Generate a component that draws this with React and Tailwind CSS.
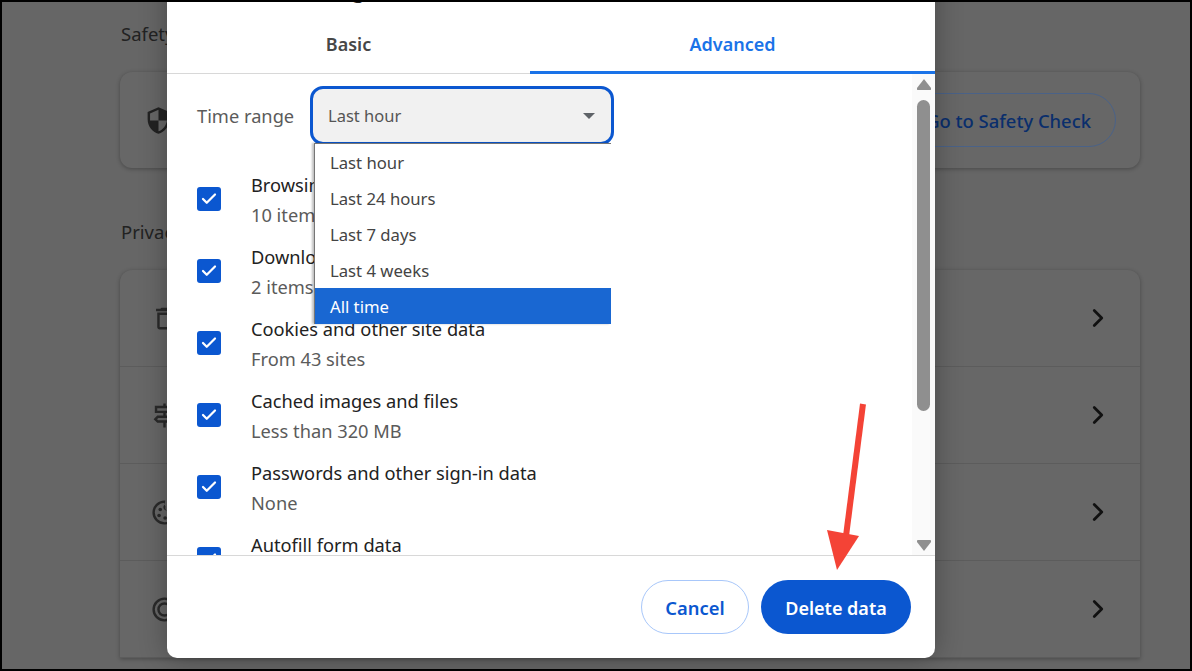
import React from 'react';
import { Check, ChevronRight } from 'lucide-react';

const font = { fontFamily: '"Noto Sans", "Liberation Sans", sans-serif' };

const TrashIcon = () => (
  <svg viewBox="0 0 24 24" className="w-[29px] h-[29px] fill-[#2a2a2a]">
    <path d="M6 19c0 1.1.9 2 2 2h8c1.1 0 2-.9 2-2V7H6v12zM8 9h8v10H8V9zm7.5-5l-1-1h-5l-1 1H5v2h14V4z" />
  </svg>
);

const SignIcon = () => (
  <svg viewBox="0 0 24 24" className="w-[29px] h-[29px] fill-[#2a2a2a]">
    <path d="M13 10h5l3-3-3-3h-5V2h-2v2H4v6h7v2H6l-3 3 3 3h5v4h2v-4h7v-6h-7v-2zM6 6h11.17l1 1-1 1H6V6zm12 10H6.83l-1-1 1-1H18v2z" />
  </svg>
);

const CookieIcon = () => (
  <svg viewBox="0 0 24 24" className="w-[29px] h-[29px] fill-[#2a2a2a]">
    <path d="M12 2a10 10 0 1 0 10 10c0-.5 0-1-.1-1.5-.9.9-2.300 1-3.400.3-1.300.7-2.900.5-3.900-.5-1.200.3-2.600-.2-3.200-1.400-.6-1.100-.4-2.500.5-3.400C12.600 5 12.400 4 12.500 2H12zm0 2v.5c0 .9.300 1.800.8 2.500-.3 1.200-.1 2.400.7 3.400.9 1 2.100 1.500 3.300 1.400 1 .5 2.100.7 3.200.4A8 8 0 1 1 12 4z" />
    <circle cx="8.500" cy="9.500" r="1.500" />
    <circle cx="7.500" cy="14.500" r="1.500" />
    <circle cx="12.500" cy="16.500" r="1.500" />
  </svg>
);

const TargetIcon = () => (
  <svg viewBox="0 0 24 24" className="w-[29px] h-[29px] fill-none stroke-[#2a2a2a] stroke-2">
    <circle cx="12" cy="12" r="9" />
    <circle cx="12" cy="12" r="5" />
  </svg>
);

const settingRows = [<TrashIcon />, <SignIcon />, <CookieIcon />, <TargetIcon />];

const deleteOptions = [
  { title: 'Browsing history', sub: '10 items' },
  { title: 'Download history', sub: '2 items' },
  { title: 'Cookies and other site data', sub: 'From 43 sites' },
  { title: 'Cached images and files', sub: 'Less than 320 MB' },
  { title: 'Passwords and other sign-in data', sub: 'None' },
  { title: 'Autofill form data', sub: '' },
];

const ranges = ['Last hour', 'Last 24 hours', 'Last 7 days', 'Last 4 weeks', 'All time'];

const SettingsBehind = () => (
  <div className="pl-[118px] pr-[50px] pt-[18px] h-full bg-[#666666] text-[#222222]">
    <h2 className="text-[18.5px] leading-[28px] h-[52px] pl-px">Safety Check</h2>
    <div className="h-[96px] rounded-[12px] bg-[#676767] shadow-[0_1px_4px_rgba(0,0,0,0.3)] flex items-center justify-between pl-[24px] pr-[24px]">
      <svg viewBox="0 0 24 24" className="w-[29px] h-[29px] fill-[#222222]">
        <path d="M12 1L3 5v6c0 5.550 3.840 10.740 9 12 5.160-1.260 9-6.450 9-12V5l-9-4zm0 10.990h7c-.53 4.120-3.280 7.790-7 8.940V12H5V6.300l7-3.110v8.800z" />
      </svg>
      <div className="h-[54px] px-[24px] pt-[2px] rounded-full border border-[#4a6288] flex items-center text-[#0a2e6c] text-[18.400px] font-medium">
        Go to Safety Check
      </div>
    </div>
    <h2 className="text-[18.5px] leading-[28px] mt-[50px] h-[28px] pl-px">Privacy and security</h2>
    <div className="mt-[24px] rounded-t-[12px] bg-[#676767] shadow-[0_1px_4px_rgba(0,0,0,0.3)]">
      {settingRows.map((icon, i) => (
        <div key={i} className="h-[97px] border-b border-[#5c5c5c] flex items-center justify-between pl-[30px] pr-[27px]">
          {icon}
          <ChevronRight size={30} strokeWidth={2.200} className="text-[#111111]" />
        </div>
      ))}
    </div>
  </div>
);

const DeleteDialog = () => (
  <div className="absolute left-[165px] top-[-38px] w-[768px] h-[694px] bg-white rounded-[10px] shadow-[0_0_28px_rgba(0,0,0,0.3)] flex flex-col">
    <div className="h-[51px] shrink-0 pl-[30px] pt-[10px] text-[22px] leading-[30px] text-[#222222]">Delete browsing data</div>

    <div className="flex h-[59px] shrink-0 text-[18px] font-semibold">
      <div className="w-[363px] border-b border-[#d8d8d8] flex items-center justify-center text-[#474747]">Basic</div>
      <div className="flex-1 border-b-[3px] border-[#1a73e8] pt-[2px] flex items-center justify-center text-[#1a73e8]">Advanced</div>
    </div>

    <div className="flex-1 flex min-h-0">
      <div className="flex-1 overflow-hidden pl-[30px]">
        <div className="flex items-center pt-[12px] mb-[18px]">
          <span className="w-[113px] text-[18.250px] text-[#5b5b5b]">Time range</span>
          <div className="relative">
            <div className="w-[304px] h-[59px] rounded-[13px] border-[3px] border-[#0b57d0] bg-[#f1f1f1] flex items-center justify-between pl-[15px] pr-[16px] text-[16.500px] text-[#555555]">
              <span className="pt-[2px]">Last hour</span>
              <svg viewBox="0 0 12 6" className="w-[12px] h-[6px] fill-[#5f6368]"><path d="M0 0h12L6 6z" /></svg>
            </div>
            <ul className="absolute left-[4px] top-[57px] w-[297px] bg-white border-l border-t border-[#767676] shadow-[-2px_0_2px_rgba(0,0,0,0.25)] text-[16.700px] text-[#444444]">
              {ranges.map(r => (
                <li key={r} className={`h-[36px] pl-[15px] pt-[2px] flex items-center ${r === 'All time' ? 'bg-[#1967d2] text-white' : ''}`}>{r}</li>
              ))}
            </ul>
          </div>
        </div>
        {deleteOptions.map(o => (
          <div key={o.title} className="h-[72px] flex items-center gap-[30px]">
            <div className="w-[24px] h-[24px] shrink-0 rounded-[3px] bg-[#0b57d0] flex items-center justify-center">
              <Check size={18} strokeWidth={3} className="text-white" />
            </div>
            <div className="whitespace-nowrap pt-[2px]">
              <div className="text-[18.250px] leading-[30px] text-[#222222]">{o.title}</div>
              <div className="text-[18.250px] leading-[30px] text-[#5b5b5b] h-[30px]">{o.sub}</div>
            </div>
          </div>
        ))}
      </div>
      <div className="w-[23px] shrink-0 bg-[#fafafa] flex flex-col items-center pt-[5px] pb-[4px]">
        <svg viewBox="0 0 14 11" className="w-[14px] h-[11px] fill-[#8f8f8f]"><path d="M7 0l7 9q.500 2-1 2H1q-1.500 0-1-2z" /></svg>
        <div className="w-[13px] h-[311px] mt-[10px] rounded-full bg-[#8f8f8f]" />
        <svg viewBox="0 0 14 11" className="w-[14px] h-[11px] mt-auto fill-[#8f8f8f]"><path d="M7 11L0 2q-.500-2 1-2h12q1.500 0 1 2z" /></svg>
      </div>
    </div>

    <div className="h-[103px] shrink-0 border-t border-[#d8d8d8] flex justify-end items-start gap-[12px] pt-[24px] pr-[24px] font-semibold">
      <button className="w-[108px] h-[54px] pt-[2px] rounded-full border border-[#a8c7fa] text-[18.400px] text-[#0b57d0]">Cancel</button>
      <button className="w-[150px] h-[54px] pt-[2px] rounded-full bg-[#0b57d0] text-[18px] text-white">Delete data</button>
    </div>
  </div>
);

const App = () => (
  <div className="w-[1192px] h-[671px] bg-black p-[2px]" style={font}>
    <div className="relative w-[1188px] h-[667px] overflow-hidden">
      <SettingsBehind />
      <DeleteDialog />
      {/* red annotation arrow */}
      <svg className="absolute left-[820px] top-[398px] w-[50px] h-[175px]" viewBox="0 0 50 175">
        <path d="M41 4L24 136" stroke="#f44336" strokeWidth="6" fill="none" />
        <path d="M5 130L37 136L15 170z" fill="#f44336" />
      </svg>
    </div>
  </div>
);

export default App;
